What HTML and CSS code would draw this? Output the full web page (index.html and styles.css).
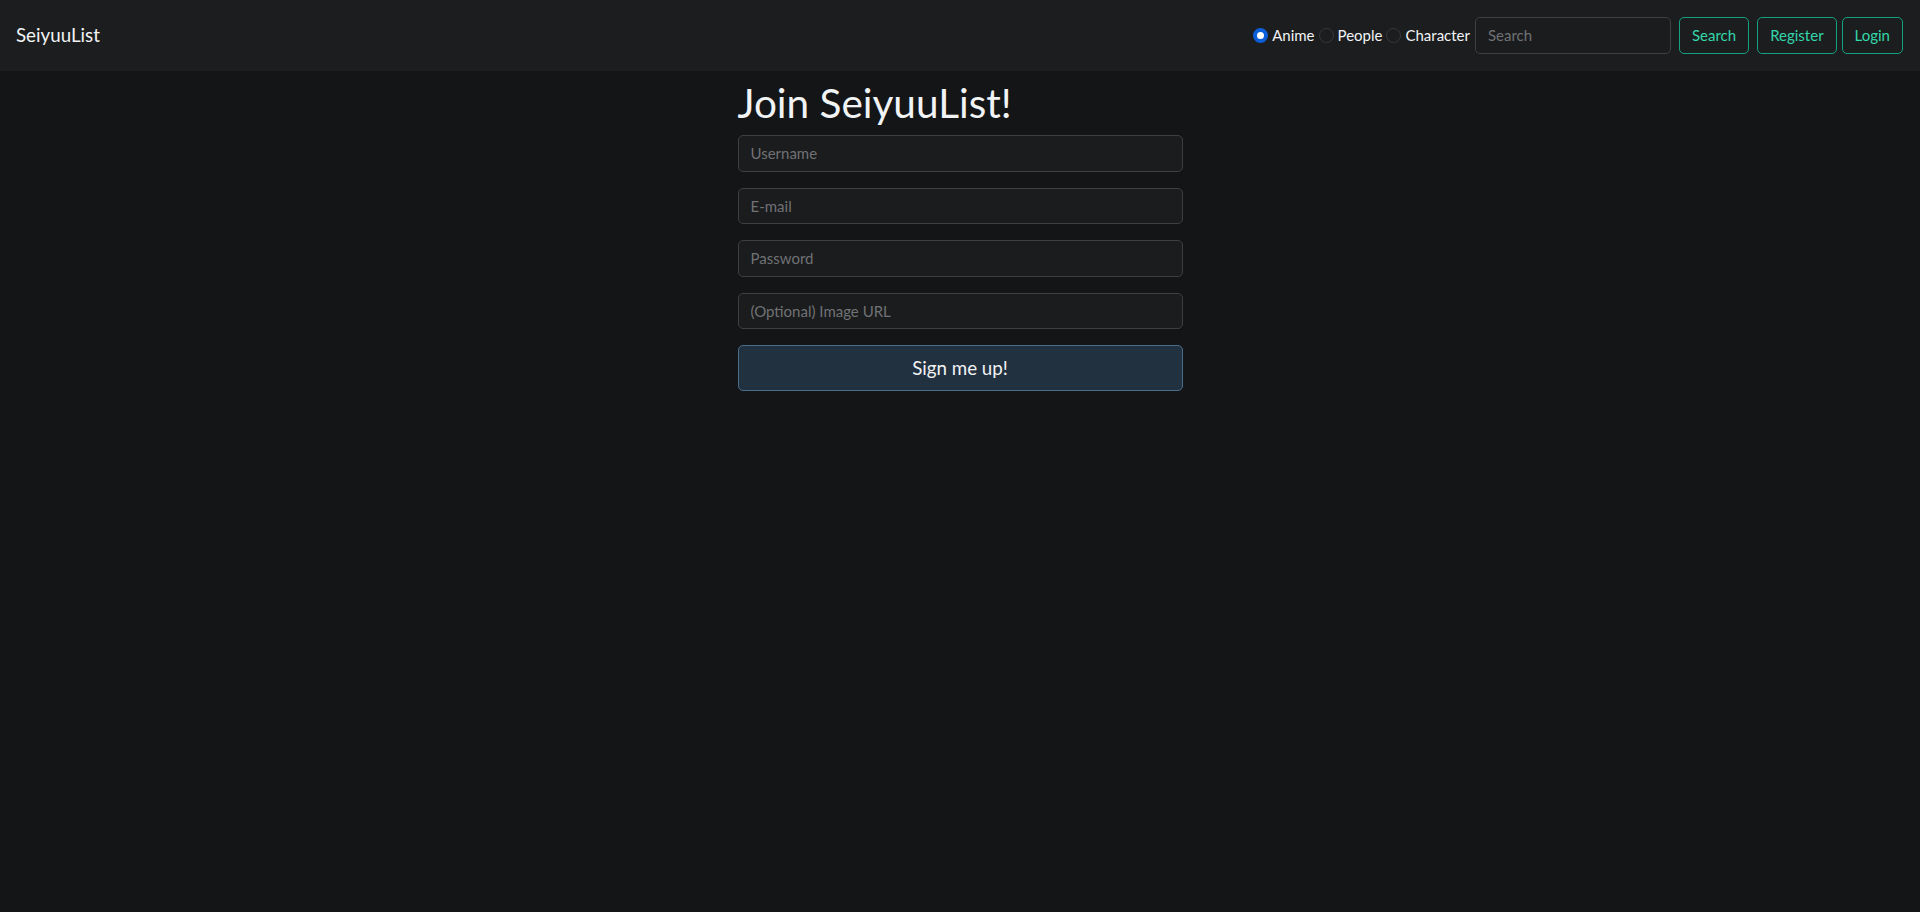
FILE: index.html
```html
<!DOCTYPE html>
<html lang="en">
<head>
<meta charset="utf-8">
<title>SeiyuuList</title>
<link rel="stylesheet" href="styles.css">
</head>
<body>
<nav class="navbar">
  <a class="brand" href="#">SeiyuuList</a>
  <form class="nav-form">
    <label class="radio-item"><input type="radio" name="kind" checked><span>Anime</span></label>
    <label class="radio-item"><input type="radio" name="kind"><span>People</span></label>
    <label class="radio-item"><input type="radio" name="kind"><span>Character</span></label>
    <input class="field nav-search" type="text" placeholder="Search">
    <button class="btn-outline search-btn" type="button">Search</button>
    <button class="btn-outline register-btn" type="button">Register</button>
    <button class="btn-outline login-btn" type="button">Login</button>
  </form>
</nav>
<main class="main">
  <section class="signup">
    <h1 class="title">Join SeiyuuList!</h1>
    <form class="signup-form">
      <input class="field form-field" type="text" placeholder="Username">
      <input class="field form-field" type="text" placeholder="E-mail">
      <input class="field form-field" type="password" placeholder="Password">
      <input class="field form-field" type="text" placeholder="(Optional) Image URL">
      <button class="btn-signup" type="button">Sign me up!</button>
    </form>
  </section>
</main>
</body>
</html>
```

FILE: styles.css
```css
* { box-sizing: border-box; }

html, body {
  margin: 0;
  padding: 0;
}

body {
  background: #141517;
  color: #e9ecef;
  font-family: Lato, "Open Sans", "Liberation Sans", sans-serif;
  font-size: 15px;
  line-height: 1.5;
  min-height: 912px;
}

.navbar {
  display: flex;
  align-items: center;
  justify-content: space-between;
  background: #1c1d1f;
  padding: 17px 17px 17px 16px;
  height: 70.5px;
}

.brand {
  color: #f1f3f5;
  text-decoration: none;
  font-size: 18.75px;
  line-height: 1.5;
}

.nav-form {
  display: flex;
  align-items: center;
  margin: 0;
}

.radio-item {
  display: flex;
  align-items: center;
  color: #f1f3f5;
  margin-right: 4px;
  cursor: pointer;
}

.radio-item input {
  appearance: none;
  -webkit-appearance: none;
  width: 15px;
  height: 15px;
  margin: 0 4px 0 0;
  border-radius: 50%;
  border: 1px solid #37393c;
  background: #1c1d1f;
}

.radio-item input:checked {
  background: #fff;
  border: 4px solid #0b5ed7;
}

.radio-item:nth-child(3) { margin-right: 5px; }

.field {
  font-family: inherit;
  font-size: 15px;
  line-height: 1.5;
  color: #e9ecef;
  background: #1b1c1e;
  border: 1px solid #3d3f42;
  border-radius: 5px;
  padding: 6px 12px;
  height: 36.5px;
  outline: none;
}

.field::placeholder { color: #707275; }

.nav-search {
  width: 196px;
  margin-right: 8px;
}

.btn-outline {
  font-family: inherit;
  font-size: 15px;
  line-height: 1.5;
  color: #33d6aa;
  background: transparent;
  border: 1px solid #14a080;
  border-radius: 5px;
  padding: 6px 12px;
  height: 36.5px;
  cursor: pointer;
}

.search-btn { margin-right: 8px; }
.register-btn { margin-right: 5px; }

.main {
  display: flex;
  justify-content: center;
}

.signup {
  width: 445px;
}

.title {
  font-size: 40.5px;
  font-weight: 400;
  line-height: 48px;
  margin: 8px 0 8.5px;
  color: #f1f3f5;
}

.signup-form {
  display: flex;
  flex-direction: column;
  margin: 0;
}

.form-field {
  width: 100%;
  margin-bottom: 16px;
}

.btn-signup {
  font-family: inherit;
  font-size: 18.75px;
  line-height: 1.5;
  color: #f1f3f5;
  background: #223140;
  border: 1px solid #4a6d8c;
  border-radius: 5px;
  padding: 8px 16px;
  width: 100%;
  cursor: pointer;
}
```
